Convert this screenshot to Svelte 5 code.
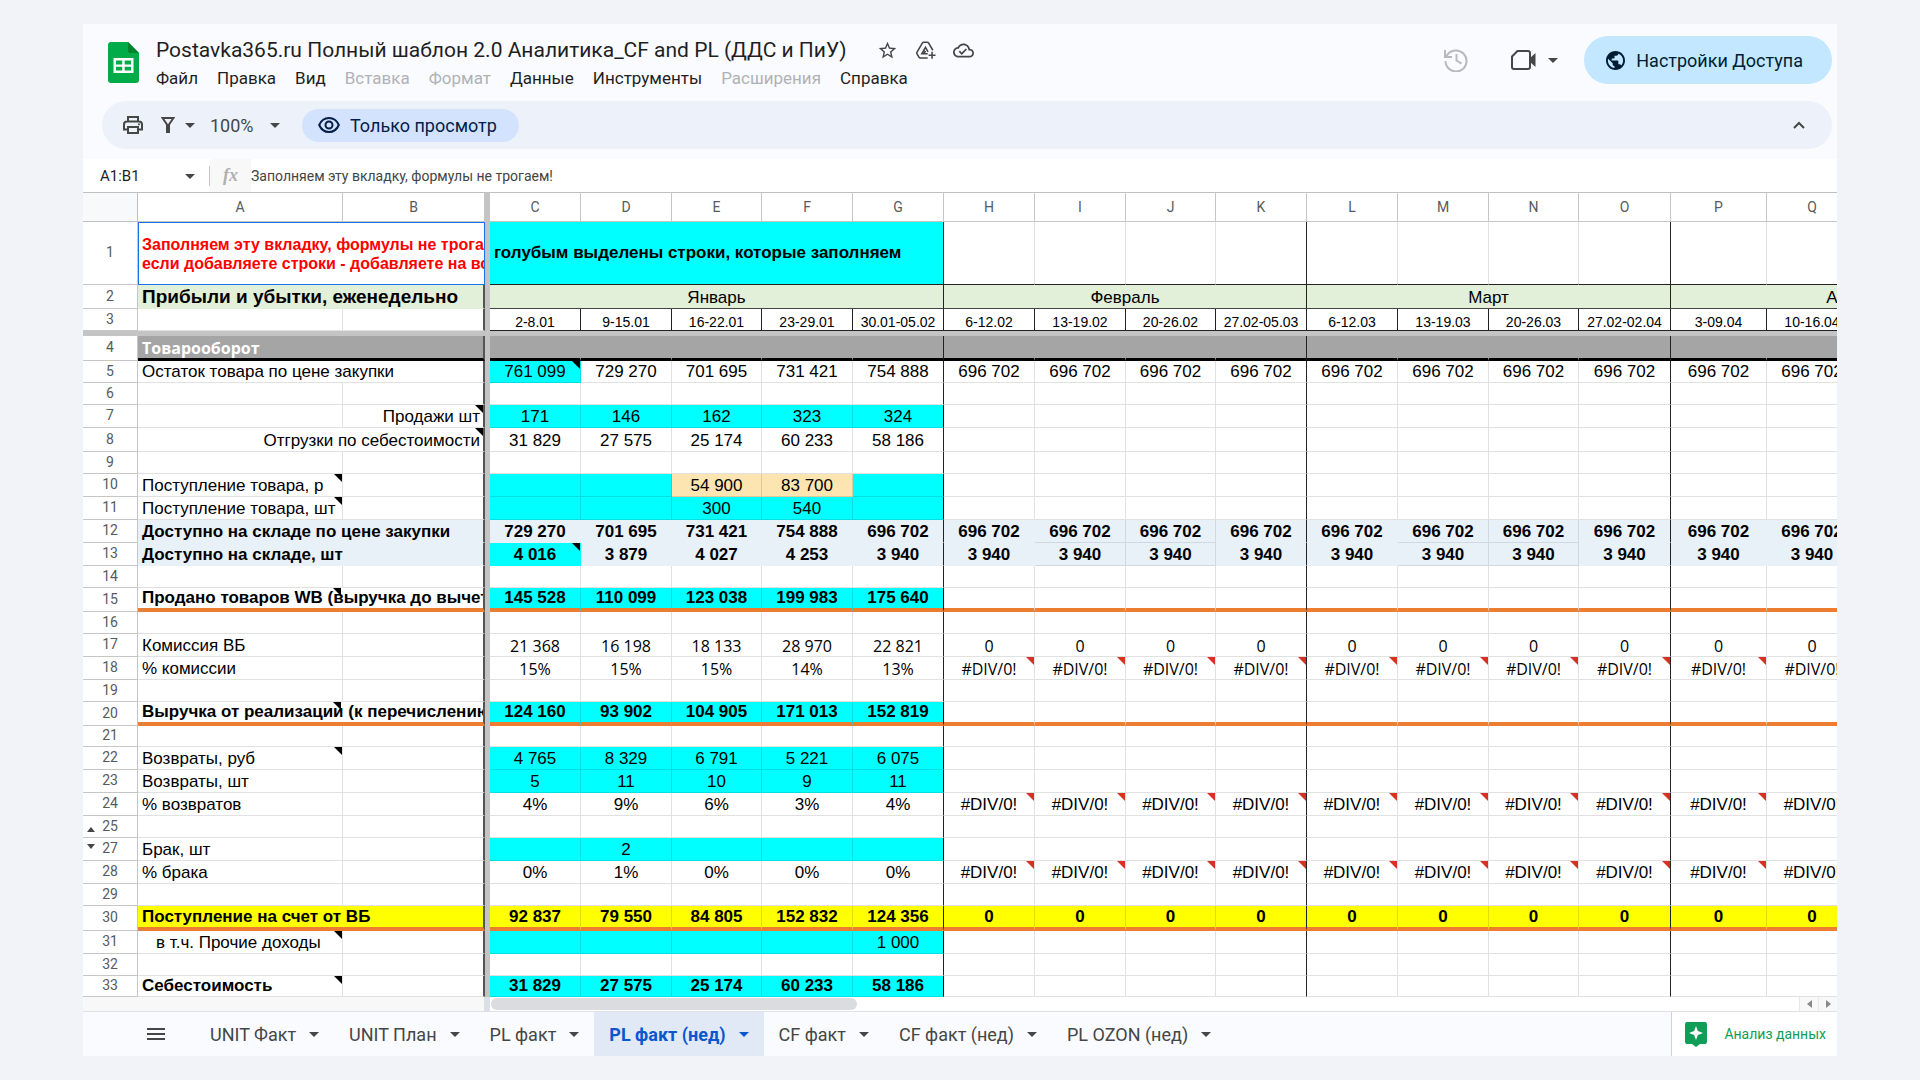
<script>
  const columns = [
    { id: 'C', w: 91 }, { id: 'D', w: 91 }, { id: 'E', w: 90 }, { id: 'F', w: 91 }, { id: 'G', w: 91, month: true },
    { id: 'H', w: 91 }, { id: 'I', w: 91, ruled: true }, { id: 'J', w: 90, ruled: true }, { id: 'K', w: 91, month: true },
    { id: 'L', w: 91 }, { id: 'M', w: 91, ruled: true }, { id: 'N', w: 90, ruled: true }, { id: 'O', w: 92, month: true },
    { id: 'P', w: 96 }, { id: 'Q', w: 91 }, { id: '', w: 91 }, { id: '', w: 91 }
  ];
  const leading = [55, 205, 142, 5];
  const tableWidth = leading.reduce((a, b) => a + b, 0) + columns.reduce((a, c) => a + c.w, 0);

  const months = [
    { name: 'Январь', span: 5 },
    { name: 'Февраль', span: 4 },
    { name: 'Март', span: 4 },
    { name: 'Апрель', span: 4 }
  ];
  const weeks = ['2-8.01', '9-15.01', '16-22.01', '23-29.01', '30.01-05.02', '6-12.02', '13-19.02', '20-26.02', '27.02-05.03',
    '6-12.03', '13-19.03', '20-26.03', '27.02-02.04', '3-09.04', '10-16.04', '', ''];

  // The weeks after January hold the same value; the last two columns are still empty.
  const rest = (v) => [...Array(10).fill(v), '', ''];
  const DIV = '#DIV/0!';

  const rows = [
    { n: 4, h: 25, label: 'Товарооборот', wide: true, kind: 'section' },
    { n: 5, h: 22, label: 'Остаток товара по цене закупки', wide: true, v: ['761 099', '729 270', '701 695', '731 421', '754 888', ...rest('696 702')], fill: [0], notes: [0] },
    { n: 6, h: 22 },
    { n: 7, h: 23, labelB: 'Продажи шт', v: ['171', '146', '162', '323', '324'], fill: [0, 1, 2, 3, 4], noteB: true },
    { n: 8, h: 24, label: 'Отгрузки по себестоимости', wide: true, right: true, v: ['31 829', '27 575', '25 174', '60 233', '58 186'], noteB: true },
    { n: 9, h: 22 },
    { n: 10, h: 23, label: 'Поступление товара, р', note: true, v: ['', '', '54 900', '83 700', ''], fill: [0, 1, 4], sand: [2, 3] },
    { n: 11, h: 23, label: 'Поступление товара, шт', note: true, v: ['', '', '300', '540', ''], fill: [0, 1, 2, 3, 4] },
    { n: 12, h: 23, label: 'Доступно на складе по цене закупки', wide: true, bold: true, kind: 'stock', v: ['729 270', '701 695', '731 421', '754 888', '696 702', ...rest('696 702')] },
    { n: 13, h: 23, label: 'Доступно на складе, шт', wide: true, bold: true, kind: 'stock', v: ['4 016', '3 879', '4 027', '4 253', '3 940', ...rest('3 940')], fill: [0], notes: [0] },
    { n: 14, h: 22 },
    { n: 15, h: 24, label: 'Продано товаров WB (выручка до вычета)', wide: true, note: true, bold: true, kind: 'total', v: ['145 528', '110 099', '123 038', '199 983', '175 640'], fill: [0, 1, 2, 3, 4] },
    { n: 16, h: 22 },
    { n: 17, h: 23, label: 'Комиссия ВБ', alt: true, v: ['21 368', '16 198', '18 133', '28 970', '22 821', ...rest('0')] },
    { n: 18, h: 23, label: '% комиссии', alt: true, v: ['15%', '15%', '15%', '14%', '13%', ...rest(DIV)] },
    { n: 19, h: 22 },
    { n: 20, h: 24, label: 'Выручка от реализации (к перечислению)', wide: true, note: true, bold: true, kind: 'total', v: ['124 160', '93 902', '104 905', '171 013', '152 819'], fill: [0, 1, 2, 3, 4] },
    { n: 21, h: 21 },
    { n: 22, h: 23, label: 'Возвраты, руб', note: true, v: ['4 765', '8 329', '6 791', '5 221', '6 075'], fill: [0, 1, 2, 3, 4] },
    { n: 23, h: 23, label: 'Возвраты, шт', v: ['5', '11', '10', '9', '11'], fill: [0, 1, 2, 3, 4] },
    { n: 24, h: 23, label: '% возвратов', v: ['4%', '9%', '6%', '3%', '4%', ...rest(DIV)] },
    { n: 25, h: 22, hidden: 'up' },
    { n: 27, h: 23, label: 'Брак, шт', v: ['', '2', '', '', ''], fill: [0, 1, 2, 3, 4], hidden: 'down' },
    { n: 28, h: 23, label: '% брака', v: ['0%', '1%', '0%', '0%', '0%', ...rest(DIV)] },
    { n: 29, h: 22 },
    { n: 30, h: 25, label: 'Поступление на счет от ВБ', wide: true, bold: true, kind: 'total income', v: ['92 837', '79 550', '84 805', '152 832', '124 356', ...rest('0')] },
    { n: 31, h: 23, label: 'в т.ч. Прочие доходы', indent: true, note: true, v: ['', '', '', '', '1 000'], fill: [0, 1, 2, 3, 4] },
    { n: 32, h: 22 },
    { n: 33, h: 21, label: 'Себестоимость', note: true, bold: true, v: ['31 829', '27 575', '25 174', '60 233', '58 186'], fill: [0, 1, 2, 3, 4] }
  ];

  const menu = [
    { t: 'Файл' }, { t: 'Правка' }, { t: 'Вид' }, { t: 'Вставка', off: true }, { t: 'Формат', off: true },
    { t: 'Данные' }, { t: 'Инструменты' }, { t: 'Расширения', off: true }, { t: 'Справка' }
  ];
  const tabs = ['UNIT Факт', 'UNIT План', 'PL факт', 'PL факт (нед)', 'CF факт', 'CF факт (нед)', 'PL OZON (нед)'];
  let active = $state('PL факт (нед)');
  let zoom = $state('100%');
  let cellRange = $state('A1:B1');
  let formula = $state('Заполняем эту вкладку, формулы не трогаем!');
</script>

{#snippet caret()}
  <svg class="caret" viewBox="0 0 10 5" aria-hidden="true"><path d="M0 0h10L5 5z" /></svg>
{/snippet}

<div class="window">
  <header>
    <svg class="logo" viewBox="0 0 31 41" aria-hidden="true">
      <path fill="#00ac47" d="M3 0h17l11 11v27a3 3 0 0 1-3 3H3a3 3 0 0 1-3-3V3a3 3 0 0 1 3-3z" />
      <path fill="#00832d" d="M20 0l11 11H22a2 2 0 0 1-2-2z" />
      <path fill="#fff" fill-rule="evenodd" d="M5.500 16h20v15h-20zM8 18.500v4h6.200v-4zm8.700 0v4H23v-4zM8 24.800v3.800h6.200v-3.800zm8.700 0v3.800H23v-3.800z" />
    </svg>
    <div class="heading">
      <div class="title">
        <h1>Postavka365.ru Полный шаблон 2.0 Аналитика_CF and PL (ДДС и ПиУ)</h1>
        <button aria-label="Пометить"><svg viewBox="0 0 24 24"><path d="M22 9.240l-7.190-.62L12 2 9.190 8.630 2 9.240l5.460 4.730L5.820 21 12 17.270 18.180 21l-1.630-7.030L22 9.240zM12 15.400l-3.760 2.270 1-4.280-3.320-2.880 4.380-.38L12 6.100l1.710 4.040 4.380.38-3.320 2.880 1 4.280L12 15.400z" /></svg></button>
        <button aria-label="Добавить на диск"><svg viewBox="0 0 24 24" fill="none" stroke="#444746" stroke-width="1.800"><path class="line" d="M14.500 20.500H6.200a2 2 0 0 1-1.700-1L2.300 15.800a2 2 0 0 1 0-2L8.400 3.500a2 2 0 0 1 1.700-1h3.800a2 2 0 0 1 1.700 1l4.800 8.200" /><path class="line" d="M14.500 15.800H7.800L12 8.500l2.900 5.100M12 12.500l-1.900 3.200M19.500 13.500v8M15.500 17.500h8" /></svg></button>
        <button aria-label="Сохранено на диске"><svg viewBox="0 0 24 24"><path d="M19.350 10.040C18.670 6.590 15.640 4 12 4 9.110 4 6.600 5.640 5.350 8.040 2.340 8.360 0 10.910 0 14c0 3.310 2.690 6 6 6h13c2.760 0 5-2.240 5-5 0-2.640-2.050-4.780-4.650-4.960zM19 18H6c-2.210 0-4-1.790-4-4 0-2.050 1.530-3.760 3.560-3.970l1.070-.11.5-.95C8.080 7.140 9.940 6 12 6c2.620 0 4.880 1.860 5.390 4.430l.3 1.500 1.530.11c1.560.1 2.780 1.410 2.780 2.960 0 1.650-1.350 3-3 3zm-9-3.820l-2.090-2.090L6.500 13.500 10 17l6.010-6.010-1.410-1.410z" /></svg></button>
      </div>
      <nav class="menu">
        {#each menu as m}
          <button disabled={m.off}>{m.t}</button>
        {/each}
      </nav>
    </div>
    <div class="actions">
      <button class="history" aria-label="История версий"><svg viewBox="0 0 24 24" stroke="#b7b9bb" stroke-width="2"><path class="line" d="M2.500 8.500A10.500 10.500 0 1 1 1.500 13M1 2v7h7M12.500 6v6.500l5 3.200" /></svg></button>
      <button class="meet" aria-label="Видеовстреча">
        <svg viewBox="0 0 25 20"><path fill="none" stroke="#444746" stroke-width="2" stroke-linejoin="round" d="M6.500 1H17a2 2 0 0 1 2 2v14a2 2 0 0 1-2 2H3a2 2 0 0 1-2-2V6.500z" /><path d="M18.500 8.500L24.500 3v14l-6-5.500z" /></svg>
        {@render caret()}
      </button>
      <button class="share">
        <svg viewBox="2 2 20 20"><path d="M12 2C6.480 2 2 6.480 2 12s4.480 10 10 10 10-4.480 10-10S17.520 2 12 2zm-1 17.930c-3.950-.49-7-3.850-7-7.930 0-.62.08-1.210.21-1.790L9 15v1c0 1.100.9 2 2 2v1.930zm6.900-2.540c-.26-.81-1-1.390-1.900-1.390h-1v-3c0-.55-.45-1-1-1H8v-2h2c.55 0 1-.45 1-1V7h2c1.100 0 2-.9 2-2v-.41c2.930 1.190 5 4.060 5 7.410 0 2.080-.8 3.970-2.100 5.390z" /></svg>
        Настройки Доступа
      </button>
    </div>
  </header>

  <div class="toolbar">
    <button class="print" aria-label="Печать"><svg viewBox="0 0 20 18" fill="none" stroke="#444746" stroke-width="2"><path class="line" d="M5 5.500V1h10v4.500M5 13.500H1V8.500a3 3 0 0 1 3-3h12a3 3 0 0 1 3 3v5h-4M5 11h10v6H5z" /><path d="M15 7.500h1.800v1.700H15z" stroke="none" /></svg></button>
    <button class="filter" aria-label="Фильтр">
      <svg viewBox="0 0 14 16"><path class="line" fill="none" stroke="#444746" stroke-width="2" d="M1.500 1h11L8 7.500V15H6V7.500z" /></svg>
      {@render caret()}
    </button>
    <label class="zoom">
      <select aria-label="Масштаб" bind:value={zoom}><option>100%</option></select>
      {@render caret()}
    </label>
    <button class="view">
      <svg viewBox="0 0 22 16"><path fill="none" stroke="#041e49" stroke-width="2" d="M1.200 8C3 3.800 6.700 1 11 1s8 2.800 9.800 7C19 12.200 15.300 15 11 15S3 12.200 1.200 8z" /><circle cx="11" cy="8" r="3.500" fill="none" stroke="#041e49" stroke-width="2" /></svg>
      Только просмотр
    </button>
    <button class="collapse" aria-label="Скрыть меню"><svg viewBox="0 0 12 8"><path fill="none" stroke="#444746" stroke-width="2" d="M1 7l5-5 5 5" /></svg></button>
  </div>

  <div class="formula">
    <div class="range">
      <input aria-label="Диапазон" bind:value={cellRange} />
      {@render caret()}
    </div>
    <span class="fx">fx</span>
    <input class="expression" aria-label="Формула" bind:value={formula} />
  </div>

  <div class="sheet">
    <table style:width="{tableWidth}px">
      <colgroup>
        {#each leading as w}<col style:width="{w}px" />{/each}
        {#each columns as c}<col style:width="{c.w}px" />{/each}
      </colgroup>
      <thead>
        <tr style:height="30px">
          <td class="corner"></td>
          <th scope="col">A</th>
          <th scope="col">B</th>
          <td class="split"></td>
          {#each columns as c}<th scope="col">{c.id}</th>{/each}
        </tr>
      </thead>
      <tbody>
        <tr class="intro" style:height="63px">
          <th scope="row">1</th>
          <td colspan="2" class="selected">Заполняем эту вкладку, формулы не трогаем!<br />если добавляете строки - добавляете на всех</td>
          <td class="split"></td>
          <td colspan="5" class="hint month">голубым выделены строки, которые заполняем</td>
          {#each columns.slice(5) as c}<td class:month={c.month}></td>{/each}
        </tr>
        <tr class="months" style:height="24px">
          <th scope="row">2</th>
          <td colspan="2" class="report edge">Прибыли и убытки, еженедельно</td>
          <td class="split"></td>
          {#each months as m}<td colspan={m.span} class="month value">{m.name}</td>{/each}
        </tr>
        <tr class="weeks" style:height="22px">
          <th scope="row">3</th>
          <td></td>
          <td class="edge"></td>
          <td class="split"></td>
          {#each weeks as w}<td class="week value">{w}</td>{/each}
        </tr>
        <tr style:height="5px"><td class="split" colspan={leading.length + columns.length}></td></tr>
        {#each rows as r}
          <tr class={[r.kind, r.bold && 'bold', r.alt && 'alt']} style:height="{r.h}px">
            <th scope="row">
              {r.n}
              {#if r.hidden}<svg class={['more', r.hidden]} viewBox="0 0 8 5" aria-hidden="true"><path d={r.hidden === 'up' ? 'M0 5h8L4 0z' : 'M0 0h8L4 5z'} /></svg>{/if}
            </th>
            {#if r.wide}
              <td colspan="2" class={['label edge', r.right && 'right']}>
                {r.label}
                {#if r.note}<i class="note inner"></i>{/if}
                {#if r.noteB}<i class="note"></i>{/if}
              </td>
            {:else}
              <td class={['label', r.indent && 'indent']}>{r.label ?? ''}{#if r.note}<i class="note"></i>{/if}</td>
              <td class="label edge right">{r.labelB ?? ''}{#if r.noteB}<i class="note"></i>{/if}</td>
            {/if}
            <td class="split"></td>
            {#each columns as c, i}
              <td class={['value', c.month && 'month', r.fill?.includes(i) && 'cyan', r.sand?.includes(i) && 'sand', c.ruled && 'ruled']}>
                {r.v?.[i] ?? ''}
                {#if r.notes?.includes(i)}<i class="note"></i>{/if}
                {#if r.v?.[i] === DIV}<i class="note error"></i>{/if}
              </td>
            {/each}
          </tr>
        {/each}
      </tbody>
    </table>
  </div>

  <div class="scroll">
    <span class="frozen"></span>
    <span class="divider"></span>
    <span class="track"><span class="thumb"></span></span>
    <button aria-label="Влево"><svg viewBox="0 0 5 8"><path d="M5 0v8L0 4z" /></svg></button>
    <button aria-label="Вправо"><svg viewBox="0 0 5 8"><path d="M0 0v8l5-4z" /></svg></button>
  </div>

  <footer>
    <button class="all" aria-label="Все листы"><svg viewBox="0 0 18 12"><path d="M0 0h18v2H0zM0 5h18v2H0zM0 10h18v2H0z" /></svg></button>
    {#each tabs as t}
      <button class="tab" class:active={t === active} onclick={() => (active = t)}>{t}{@render caret()}</button>
    {/each}
    <button class="explore">
      <svg viewBox="0 0 22 25"><path fill="#0f9d58" d="M2 0h18a2 2 0 0 1 2 2v18a2 2 0 0 1-2 2h-5l-4 3-4-3H2a2 2 0 0 1-2-2V2a2 2 0 0 1 2-2z" /><path fill="#fff" d="M11 4l1.900 4.900L18 11l-5.100 2.100L11 18l-1.900-4.900L4 11l5.100-2.100z" /></svg>
      Анализ данных
    </button>
  </footer>
</div>

<style>
  :global(body) {
    background: #f1f3f8;
    font-family: Roboto, 'Liberation Sans', sans-serif;
    color: #1f1f1f;
  }
  button, input, select {
    margin: 0;
    padding: 0;
    border: 0;
    background: none;
    font: inherit;
    color: inherit;
    outline: 0;
  }
  button {
    display: flex;
    align-items: center;
    flex: none;
    white-space: nowrap;
  }
  svg {
    flex: none;
    fill: #444746;
  }
  svg .line { fill: none; }
  .caret {
    width: 10px;
    height: 5px;
  }
  .window {
    margin: 24px 83px;
    background: #fafbfe;
    overflow: hidden;
  }

  header {
    display: flex;
    height: 77px;
    padding: 0 5px 0 25px;
  }
  .logo {
    width: 31px;
    height: 41px;
    margin-top: 18px;
  }
  .heading {
    flex: 1;
    min-width: 0;
    padding: 12px 0 0 17px;
  }
  .title {
    display: flex;
    align-items: center;
    height: 28px;
  }
  .title button { margin-right: 17px; }
  .title svg {
    width: 21px;
    height: 21px;
  }
  h1 {
    margin: 0 30px 0 0;
    font-size: 21px;
    line-height: 28px;
    font-weight: 400;
    white-space: nowrap;
  }
  .menu {
    display: flex;
    gap: 19px;
    font-size: 17px;
    line-height: 28px;
  }
  .menu button:disabled { color: #b0b2b6; }
  .actions {
    display: flex;
    align-items: center;
    height: 48px;
    margin-top: 12px;
  }
  .history svg {
    width: 24px;
    height: 24px;
  }
  .meet {
    gap: 12px;
    margin: 0 26px 0 43px;
  }
  .meet > svg:first-child {
    width: 25px;
    height: 20px;
  }
  .share {
    gap: 11px;
    height: 48px;
    padding: 0 29px 0 22px;
    border-radius: 24px;
    background: #c2e7ff;
    color: #001d35;
    font-size: 18px;
  }
  .share svg {
    width: 19px;
    height: 19px;
    fill: #001d35;
  }

  .toolbar {
    display: flex;
    align-items: center;
    height: 48px;
    margin: 0 5px 10px 19px;
    padding: 0 27px 0 21px;
    border-radius: 24px;
    background: #edf2fa;
    color: #444746;
  }
  .print svg {
    width: 20px;
    height: 18px;
  }
  .filter {
    gap: 10px;
    margin: 0 15px 0 18px;
  }
  .filter > svg:first-child {
    width: 14px;
    height: 16px;
  }
  .zoom {
    display: flex;
    align-items: center;
    font-size: 18px;
  }
  .zoom select {
    appearance: none;
    width: 60px;
  }
  .view {
    gap: 10px;
    height: 33px;
    margin-left: 22px;
    padding: 0 22px 0 16px;
    border-radius: 17px;
    background: #d3e3fd;
    color: #041e49;
    font-size: 18px;
  }
  .view svg {
    width: 22px;
    height: 16px;
  }
  .collapse { margin-left: auto; }
  .collapse svg {
    width: 12px;
    height: 8px;
  }

  .formula {
    display: flex;
    height: 33px;
    background: #fff;
    font-size: 15px;
  }
  .range {
    display: flex;
    align-items: center;
    gap: 5px;
    flex: 0 0 127px;
    min-width: 0;
    height: 20px;
    margin-top: 7px;
    padding: 0 14px 0 17px;
    border-right: 1px solid #c7c7c7;
    box-sizing: border-box;
  }
  .range input {
    flex: 1;
    min-width: 0;
  }
  .fx {
    width: 41px;
    background: #f8f8f8;
    color: #b0b0b0;
    font: italic 700 18px/33px 'Liberation Serif', serif;
    text-align: center;
  }
  .expression {
    flex: 1;
    color: #444;
    font-size: 14px;
  }

  .sheet {
    overflow: hidden;
    background: #fff;
  }
  table {
    table-layout: fixed;
    border-collapse: separate;
    border-spacing: 0;
    font-family: 'Liberation Sans', Arial, sans-serif;
    font-size: 17px;
    line-height: 20px;
    color: #000;
  }
  th, td {
    position: relative;
    box-sizing: border-box;
    height: inherit;
    padding: 0;
    border: 0 solid #e1e1e1;
    border-width: 0 1px 1px 0;
    overflow: hidden;
    white-space: nowrap;
    vertical-align: bottom;
  }
  th {
    border-color: #c6c6c6;
    font: 400 14px/16px Roboto, sans-serif;
    color: #575a5d;
    vertical-align: middle;
    text-align: center;
  }
  tbody th { padding-bottom: 2px; }
  thead th, .corner { border-top: 1px solid #c0c0c0; }
  .corner {
    border-color: #c0c0c0;
    background: #f8f9fa;
  }
  .split {
    border: 0;
    background: #c4c4c4;
  }
  .label { padding: 0 3px 0 4px; }
  .indent { padding-left: 18px; }
  .right { text-align: right; }
  .value { text-align: center; }
  .bold td { font-weight: 700; }
  .edge {
    border-right: 2px solid #555;
  }
  .month { border-right-color: #222; }

  .intro td { border-bottom-color: #222; }
  .intro td.selected {
    padding-left: 3px;
    border: 1px solid #1a73e8;
    color: #f00;
    font-size: 16px;
    line-height: 19px;
    font-weight: 700;
    vertical-align: middle;
  }
  .hint {
    padding-left: 4px;
    background: #0ff;
    font-weight: 700;
    vertical-align: middle;
  }
  .months td:not(.split) {
    background: #e2efd9;
    border-bottom-color: #444;
  }
  .months td.report {
    padding-left: 4px;
    border-bottom-color: #e2efd9;
    font-size: 19px;
    line-height: 22px;
    font-weight: 700;
  }
  .weeks td { line-height: 15px; }
  .week {
    border-color: #222;
    font-size: 14px;
  }

  .section td:not(.split) {
    border-bottom: 3px solid #000;
    background: #a5a5a5;
    color: #fff;
    font-weight: 700;
    font-size: 16px;
    font-family: 'Open Sans', sans-serif;
  }
  .section .value:not(.month) { border-right-color: #a5a5a5; }
  .alt .value {
    font-family: 'Open Sans', sans-serif;
    font-size: 16px;
  }
  .stock td:not(.split):not(.cyan) { background: #e8f0f8; }
  .stock td:not(.ruled) { border-bottom-color: transparent; }
  .stock .value:not(.ruled):not(.month) { border-right-color: transparent; }
  .stock .ruled { border-color: #d0d8e1; }
  .total td:not(.split) { border-bottom: 4px solid #ed7d31; }
  .income td:not(.split) { background: #ff0; }
  .income .value:not(.month) { border-right-color: rgba(0, 0, 0, 0.12); }
  .cyan {
    background: #0ff;
    border-color: rgba(0, 0, 0, 0.12);
  }
  .cyan.month { border-right-color: #000; }
  .sand {
    background: #fce5b0;
    border-color: rgba(0, 0, 0, 0.12);
  }
  .note {
    position: absolute;
    top: 0;
    right: 0;
    width: 8px;
    height: 8px;
    background: #000;
    clip-path: polygon(0 0, 100% 0, 100% 100%);
  }
  .note.inner { right: 142px; }
  .note.error { background: #d93025; }
  .more {
    position: absolute;
    left: 4px;
    width: 8px;
    height: 5px;
  }
  .more.up { bottom: 5px; }
  .more.down { top: 6px; }

  .scroll {
    display: flex;
    height: 14px;
    background: #fff;
  }
  .frozen {
    flex: 0 0 401px;
    background: #f8f8f8;
  }
  .divider {
    flex: 0 0 6px;
    background: #dadfe8;
  }
  .track {
    flex: 1;
    padding: 1px;
  }
  .thumb {
    display: block;
    width: 28%;
    height: 12px;
    border-radius: 6px;
    background: #dadce0;
  }
  .scroll button {
    justify-content: center;
    width: 19px;
    border-left: 1px solid #e8e8e8;
    background: #f8f8f8;
  }
  .scroll svg {
    width: 5px;
    height: 8px;
    fill: #8a8a8a;
  }

  footer {
    display: flex;
    height: 45px;
    border-top: 1px solid #dfe1e4;
    box-sizing: border-box;
    color: #444746;
    font-size: 18px;
  }
  .all { padding: 0 30px 0 64px; }
  .all svg {
    width: 18px;
    height: 12px;
  }
  .tab {
    gap: 13px;
    padding: 0 15px;
  }
  .tab.active {
    background: #e1e9f7;
    color: #0b57d0;
    font-weight: 700;
  }
  .tab.active .caret { fill: #0b57d0; }
  .explore {
    gap: 17px;
    margin-left: auto;
    padding: 0 11px 0 13px;
    border-left: 1px solid #d0d3d8;
    background: #fff;
    color: #0f9d58;
    font-size: 14px;
  }
  .explore svg {
    width: 22px;
    height: 25px;
  }
</style>
